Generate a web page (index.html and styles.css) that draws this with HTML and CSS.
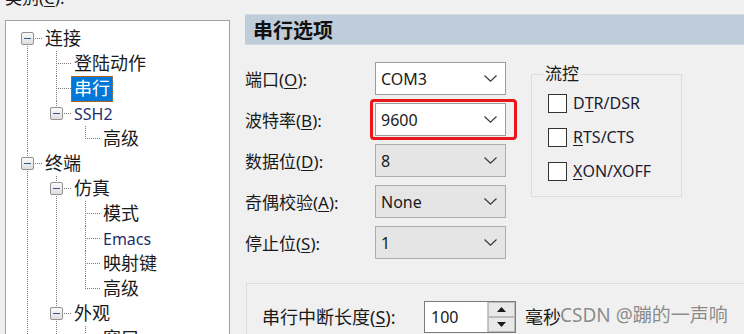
FILE: index.html
```html
<!DOCTYPE html>
<html lang="zh-CN">
<head>
    <meta charset="UTF-8">
    <title>串行选项</title>
    <link rel="stylesheet" href="styles.css">
</head>
<body>
    <div class="window">
        <div class="category">
            <div class="cat-label">类别(<u>C</u>):</div>
            <div class="tree-box">
                <ul class="tree">
                    <li>
                        <div class="row"><span class="toggle"></span><span class="label">连接</span></div>
                        <ul>
                            <li><div class="row"><span class="label">登陆动作</span></div></li>
                            <li><div class="row"><span class="label selected">串行</span></div></li>
                            <li>
                                <div class="row"><span class="toggle"></span><span class="label navy">SSH2</span></div>
                                <ul>
                                    <li><div class="row"><span class="label">高级</span></div></li>
                                </ul>
                            </li>
                        </ul>
                    </li>
                    <li>
                        <div class="row"><span class="toggle"></span><span class="label">终端</span></div>
                        <ul>
                            <li>
                                <div class="row"><span class="toggle"></span><span class="label">仿真</span></div>
                                <ul>
                                    <li><div class="row"><span class="label">模式</span></div></li>
                                    <li><div class="row"><span class="label navy">Emacs</span></div></li>
                                    <li><div class="row"><span class="label">映射键</span></div></li>
                                    <li><div class="row"><span class="label">高级</span></div></li>
                                </ul>
                            </li>
                            <li>
                                <div class="row"><span class="toggle"></span><span class="label">外观</span></div>
                                <ul>
                                    <li><div class="row"><span class="label">窗口</span></div></li>
                                    <li><div class="row"><span class="label">日志文件</span></div></li>
                                </ul>
                            </li>
                            <li><div class="row"><span class="label">打印</span></div></li>
                        </ul>
                    </li>
                    <li><div class="row"><span class="label">文件传输</span></div></li>
                </ul>
            </div>
        </div>

        <div class="options">
            <div class="section-title">串行选项</div>
            <div class="settings">
                <div class="fields">
                    <div class="field">
                        <label>端口(<u>O</u>):</label>
                        <div class="combo">COM3<svg class="chevron" width="13" height="7" viewBox="0 0 13 7"><path d="M0.5 0.5 L6.5 6.2 L12.5 0.5"/></svg></div>
                    </div>
                    <div class="field">
                        <label>波特率(<u>B</u>):</label>
                        <div class="combo highlight">9600<svg class="chevron" width="13" height="7" viewBox="0 0 13 7"><path d="M0.5 0.5 L6.5 6.2 L12.5 0.5"/></svg></div>
                    </div>
                    <div class="field">
                        <label>数据位(<u>D</u>):</label>
                        <div class="combo gray">8<svg class="chevron" width="13" height="7" viewBox="0 0 13 7"><path d="M0.5 0.5 L6.5 6.2 L12.5 0.5"/></svg></div>
                    </div>
                    <div class="field">
                        <label>奇偶校验(<u>A</u>):</label>
                        <div class="combo gray">None<svg class="chevron" width="13" height="7" viewBox="0 0 13 7"><path d="M0.5 0.5 L6.5 6.2 L12.5 0.5"/></svg></div>
                    </div>
                    <div class="field">
                        <label>停止位(<u>S</u>):</label>
                        <div class="combo gray">1<svg class="chevron" width="13" height="7" viewBox="0 0 13 7"><path d="M0.5 0.5 L6.5 6.2 L12.5 0.5"/></svg></div>
                    </div>
                </div>
                <fieldset class="flow">
                    <legend>流控</legend>
                    <label class="check"><span class="box"></span>D<u>T</u>R/DSR</label>
                    <label class="check"><span class="box"></span><u>R</u>TS/CTS</label>
                    <label class="check"><span class="box"></span><u>X</u>ON/XOFF</label>
                </fieldset>
            </div>
            <div class="break-group">
                <label class="break-label">串行中断长度(<u>S</u>):</label>
                <div class="spin">
                    <span class="spin-value">100</span>
                    <span class="spin-btns">
                        <span class="spin-btn"><svg width="9" height="5" viewBox="0 0 9 5"><path d="M4.5 0 L9 5 L0 5 Z"/></svg></span>
                        <span class="spin-btn"><svg width="9" height="5" viewBox="0 0 9 5"><path d="M0 0 L9 0 L4.5 5 Z"/></svg></span>
                    </span>
                </div>
                <span class="unit">毫秒</span>
            </div>
        </div>
    </div>
    <div class="watermark">CSDN @蹦的一声响</div>
</body>
</html>
```

FILE: styles.css
```css
body { margin: 0; height: 334px; overflow: hidden; background: #f0f0f0; color: #1a1a1a; font-family: "Noto Sans", "Noto Sans CJK SC", sans-serif; position: relative; }
u { text-decoration-thickness: 1px; text-underline-offset: 2px; }

.window { display: flex; }

/* left: category tree */
.category { width: 225px; padding-left: 5px; flex-shrink: 0; }
.cat-label { height: 20px; line-height: 20px; margin-top: -12px; font-size: 17px; }
.tree-box { margin-top: 12px; height: 340px; background: #fff; border: 1px solid #a0a0a0; box-sizing: border-box; padding-top: 5px; overflow: hidden; }

.tree, .tree ul { list-style: none; margin: 0; padding: 0; }
.tree ul { padding-left: 29px; }
.tree li { position: relative; }
/* dotted tree lines: vertical sibling line + horizontal connector */
.tree li::before {
    content: "";
    position: absolute;
    left: 21px;
    top: 0;
    bottom: 0;
    width: 1px;
    background: repeating-linear-gradient(to bottom, #7c7c7c 0 1px, transparent 1px 2px);
}
.tree li:last-child::before { bottom: auto; height: 13px; }
.tree > li:first-child::before { top: 12px; }
.tree li::after {
    content: "";
    position: absolute;
    left: 22px;
    top: 12px;
    width: 14px;
    height: 1px;
    background: repeating-linear-gradient(to right, transparent 0 1px, #7c7c7c 1px 2px);
}
.row { position: relative; height: 25px; line-height: 25px; padding-left: 39px; font-size: 18px; white-space: nowrap; }
.toggle { position: absolute; z-index: 1; left: 15px; top: 6px; width: 13px; height: 13px; box-sizing: border-box; border: 1px solid #929292; border-radius: 2px; background: linear-gradient(#fafafa, #dedede); }
.toggle::after { content: ""; position: absolute; left: 2px; top: 5px; width: 7px; height: 1px; background: #3b5390; }
.label { display: inline-block; }
.label.navy { color: #1f2f6e; font-size: 16px; }
.label.selected { position: relative; z-index: 1; margin-left: -3px; padding: 0 2px; height: 24px; line-height: 23px; background: #0078d7; color: #fff; border: 1px dotted #c0762a; }

/* right: serial options */
.options { margin-left: 15px; flex: 1; font-size: 17px; }
.section-title { margin-top: 14px; height: 31px; line-height: 31px; padding-left: 8px; background: #bfcddb; border-top: 1px solid #d3dce6; border-bottom: 1px solid #d3dce6; box-sizing: border-box; font-size: 20px; font-weight: bold; color: #111; }
.settings { display: flex; margin-top: 17px; }
.fields { width: 261px; }
.field { display: flex; align-items: center; height: 33px; margin-bottom: 8px; }
.field label { width: 130px; }
.combo { position: relative; display: flex; align-items: center; justify-content: space-between; width: 131px; height: 33px; box-sizing: border-box; padding: 0 8px 0 5px; background: #fff; border: 1px solid #9c9c9c; font-size: 16px; }
.combo.gray { background: #e5e5e5; border-color: #adadad; }
.combo.highlight::after { content: ""; position: absolute; left: -6px; right: -12px; top: -5px; bottom: -5px; border: 3px solid #e8171b; border-radius: 4px; }
.chevron path { fill: none; stroke: #3a3a3a; stroke-width: 1.2; }

.flow { margin: 0 0 0 25px; padding: 0 0 0 16px; width: 151px; height: 135px; box-sizing: border-box; border: 1px solid #dcdcdc; display: flex; flex-direction: column; gap: 14px; }
.flow legend { margin-left: -5px; padding: 0 2px; line-height: 24px; font-size: 17px; }
.check { display: flex; align-items: center; height: 20px; font-size: 16px; color: #1c1c30; }
.check:first-of-type { margin-top: 7px; }
.box { width: 19px; height: 19px; box-sizing: border-box; border: 1px solid #333; background: #fff; margin-right: 6px; }

.break-group { display: flex; align-items: flex-start; margin: 16px 0 0 1px; width: 600px; height: 80px; box-sizing: border-box; padding: 17px 0 0 15px; border-top: 1px solid #dcdcdc; border-left: 1px solid #dcdcdc; }
.break-label { width: 162px; line-height: 32px; font-size: 18px; }
.spin { display: flex; width: 92px; height: 32px; box-sizing: border-box; border: 1px solid #7a7a7a; background: #fff; }
.spin-value { flex: 1; padding-left: 6px; line-height: 30px; font-size: 16px; }
.spin-btns { display: flex; flex-direction: column; width: 27px; border-left: 1px solid #c8c8c8; }
.spin-btn { flex: 1; display: flex; align-items: center; justify-content: center; background: #e8e8e8; border: 1px solid #bcbcbc; }
.spin-btn svg path { fill: #1a1a1a; }
.unit { margin-left: 9px; line-height: 32px; font-size: 18px; }

.watermark { position: absolute; left: 560px; top: 302px; line-height: 26px; font-size: 19px; color: #8a8a8a; white-space: nowrap; text-shadow: 0 0 1px #fff; }
```
